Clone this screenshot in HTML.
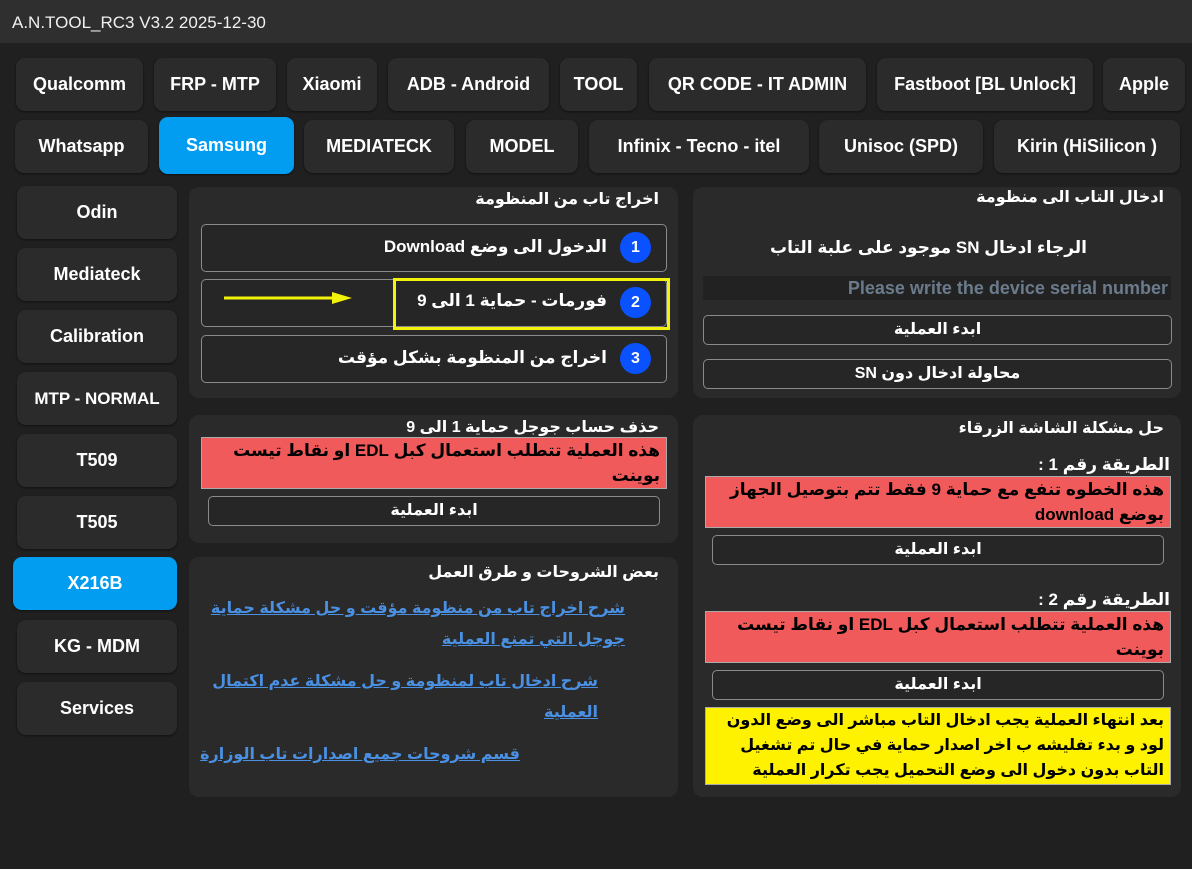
<!DOCTYPE html>
<html><head><meta charset="utf-8"><style>
*{box-sizing:border-box;margin:0;padding:0}
body{width:1192px;height:869px;background:#202020;font-family:"Liberation Sans","DejaVu Sans",sans-serif;color:#fff;position:relative;overflow:hidden}
.a{position:absolute}
.title{left:0;top:0;width:1192px;height:43px;background:#2f2f2f;font-size:17px;padding:13px 0 0 12px;color:#f0f0f0}
.b{position:absolute;background:#2b2b2b;border-radius:9px;box-shadow:0 1px 2px #111;display:flex;align-items:center;justify-content:center;font-weight:bold;font-size:18px;color:#fff;white-space:nowrap}
.blue{background:#029cf0}
.p{position:absolute;background:#2a2a2a;border-radius:10px}
.ar{direction:rtl;font-weight:bold;font-size:16px;position:absolute;white-space:nowrap}
.ob{position:absolute;border:1px solid #8a8a8a;border-radius:5px;background:#262626;font-weight:bold;font-size:16px;direction:rtl;text-align:center;white-space:nowrap}
.num{position:absolute;width:31px;height:31px;border-radius:50%;background:#0a52ff;font-weight:bold;font-size:16px;display:flex;align-items:center;justify-content:center}
.red{position:absolute;background:#f05a5a;border:1px solid #aaa;color:#000;font-weight:bold;font-size:17px;direction:rtl;padding:0 6px;line-height:25px;white-space:nowrap;overflow:hidden}
.lnk{position:absolute;color:#4a90e2;text-decoration:underline;font-weight:bold;font-size:16px;direction:rtl;line-height:31px;text-align:right;white-space:nowrap}
</style></head><body>
<div class="a title">A.N.TOOL_RC3 V3.2 2025-12-30</div>

<div class="b" style="left:16px;top:58px;width:127px;height:53px">Qualcomm</div>
<div class="b" style="left:154px;top:58px;width:122px;height:53px">FRP - MTP</div>
<div class="b" style="left:287px;top:58px;width:90px;height:53px">Xiaomi</div>
<div class="b" style="left:388px;top:58px;width:161px;height:53px">ADB - Android</div>
<div class="b" style="left:560px;top:58px;width:77px;height:53px">TOOL</div>
<div class="b" style="left:649px;top:58px;width:217px;height:53px">QR CODE - IT ADMIN</div>
<div class="b" style="left:877px;top:58px;width:216px;height:53px">Fastboot [BL Unlock]</div>
<div class="b" style="left:1103px;top:58px;width:82px;height:53px">Apple</div>

<div class="b" style="left:15px;top:120px;width:133px;height:53px">Whatsapp</div>
<div class="b blue" style="left:159px;top:117px;width:135px;height:57px">Samsung</div>
<div class="b" style="left:304px;top:120px;width:150px;height:53px">MEDIATECK</div>
<div class="b" style="left:466px;top:120px;width:112px;height:53px">MODEL</div>
<div class="b" style="left:589px;top:120px;width:220px;height:53px">Infinix - Tecno - itel</div>
<div class="b" style="left:819px;top:120px;width:164px;height:53px">Unisoc (SPD)</div>
<div class="b" style="left:994px;top:120px;width:186px;height:53px">Kirin (HiSilicon )</div>

<div class="b" style="left:17px;top:186px;width:160px;height:53px">Odin</div>
<div class="b" style="left:17px;top:248px;width:160px;height:53px">Mediateck</div>
<div class="b" style="left:17px;top:310px;width:160px;height:53px">Calibration</div>
<div class="b" style="left:17px;top:372px;width:160px;height:53px;font-size:17px">MTP - NORMAL</div>
<div class="b" style="left:17px;top:434px;width:160px;height:53px">T509</div>
<div class="b" style="left:17px;top:496px;width:160px;height:53px">T505</div>
<div class="b blue" style="left:13px;top:557px;width:164px;height:53px">X216B</div>
<div class="b" style="left:17px;top:620px;width:160px;height:53px">KG - MDM</div>
<div class="b" style="left:17px;top:682px;width:160px;height:53px">Services</div>

<!-- panel 1 -->
<div class="p" style="left:189px;top:187px;width:489px;height:211px"></div>
<div class="ar" style="right:533px;top:189px">اخراج تاب من المنظومة</div>
<div class="ob" style="left:201px;top:224px;width:466px;height:48px"></div>
<div class="ar" style="right:585px;top:237px;font-size:17px">الدخول الى وضع Download</div>
<div class="num" style="left:620px;top:232px">1</div>
<div class="ob" style="left:201px;top:279px;width:466px;height:48px"></div>
<div class="a" style="left:393px;top:278px;width:277px;height:52px;border:3px solid #f2f20a"></div>
<div class="ar" style="right:585px;top:291px;font-size:17px">فورمات - حماية 1 الى 9</div>
<div class="num" style="left:620px;top:287px">2</div>
<svg class="a" style="left:222px;top:290px" width="132" height="18"><line x1="2" y1="8" x2="116" y2="8" stroke="#f2f20a" stroke-width="3"/><polygon points="110,2 130,8 110,14" fill="#f2f20a"/></svg>
<div class="ob" style="left:201px;top:335px;width:466px;height:48px"></div>
<div class="ar" style="right:585px;top:348px;font-size:17px">اخراج من المنظومة بشكل مؤقت</div>
<div class="num" style="left:620px;top:343px">3</div>

<!-- panel 2 -->
<div class="p" style="left:189px;top:415px;width:489px;height:128px"></div>
<div class="ar" style="right:533px;top:417px;background:#2a2a2a;padding-left:4px">حذف حساب جوجل حماية 1 الى 9</div>
<div class="red" style="left:201px;top:437px;width:466px;height:52px">هذه العملية تتطلب استعمال كبل EDL او نقاط تيست<br>بوينت</div>
<div class="ob" style="left:208px;top:496px;width:452px;height:30px;line-height:28px">ابدء العملية</div>

<!-- panel 3 -->
<div class="p" style="left:189px;top:557px;width:489px;height:240px"></div>
<div class="ar" style="right:533px;top:562px">بعض الشروحات و طرق العمل</div>
<div class="lnk" style="right:567px;top:593px">شرح اخراج تاب من منظومة مؤقت و حل مشكلة حماية<br>جوجل التي تمنع العملية</div>
<div class="lnk" style="right:594px;top:666px">شرح ادخال تاب لمنظومة و حل مشكلة عدم اكتمال<br>العملية</div>
<div class="lnk" style="right:672px;top:739px">قسم شروحات جميع اصدارات تاب الوزارة</div>

<!-- right panel 1 -->
<div class="p" style="left:693px;top:187px;width:488px;height:211px"></div>
<div class="ar" style="right:28px;top:187px">ادخال التاب الى منظومة</div>
<div class="ar" style="right:105px;top:238px;font-size:17px">الرجاء ادخال SN موجود على علبة التاب</div>
<div class="a" style="left:703px;top:276px;width:468px;height:24px;background:#222;color:#6b7b8c;font-weight:bold;font-size:18px;text-align:right;padding-right:3px;line-height:24px;white-space:nowrap;overflow:hidden">Please write the device serial number</div>
<div class="ob" style="left:703px;top:315px;width:469px;height:30px;line-height:28px">ابدء العملية</div>
<div class="ob" style="left:703px;top:359px;width:469px;height:30px;line-height:28px">محاولة ادخال دون SN</div>

<!-- right panel 2 -->
<div class="p" style="left:693px;top:415px;width:488px;height:382px"></div>
<div class="ar" style="right:28px;top:418px">حل مشكلة الشاشة الزرقاء</div>
<div class="ar" style="right:22px;top:455px;font-size:17px">الطريقة رقم 1 :</div>
<div class="red" style="left:705px;top:476px;width:466px;height:52px">هذه الخطوه تنفع مع حماية 9 فقط تتم بتوصيل الجهاز<br>بوضع download</div>
<div class="ob" style="left:712px;top:535px;width:452px;height:30px;line-height:28px">ابدء العملية</div>
<div class="ar" style="right:22px;top:590px;font-size:17px">الطريقة رقم 2 :</div>
<div class="red" style="left:705px;top:611px;width:466px;height:52px">هذه العملية تتطلب استعمال كبل EDL او نقاط تيست<br>بوينت</div>
<div class="ob" style="left:712px;top:670px;width:452px;height:30px;line-height:28px">ابدء العملية</div>
<div class="red" style="left:705px;top:707px;width:466px;height:78px;background:#fff200;font-size:16px">بعد انتهاء العملية يجب ادخال التاب مباشر الى وضع الدون<br>لود و بدء تفليشه ب اخر اصدار حماية في حال تم تشغيل<br>التاب بدون دخول الى وضع التحميل يجب تكرار العملية</div>
</body></html>
